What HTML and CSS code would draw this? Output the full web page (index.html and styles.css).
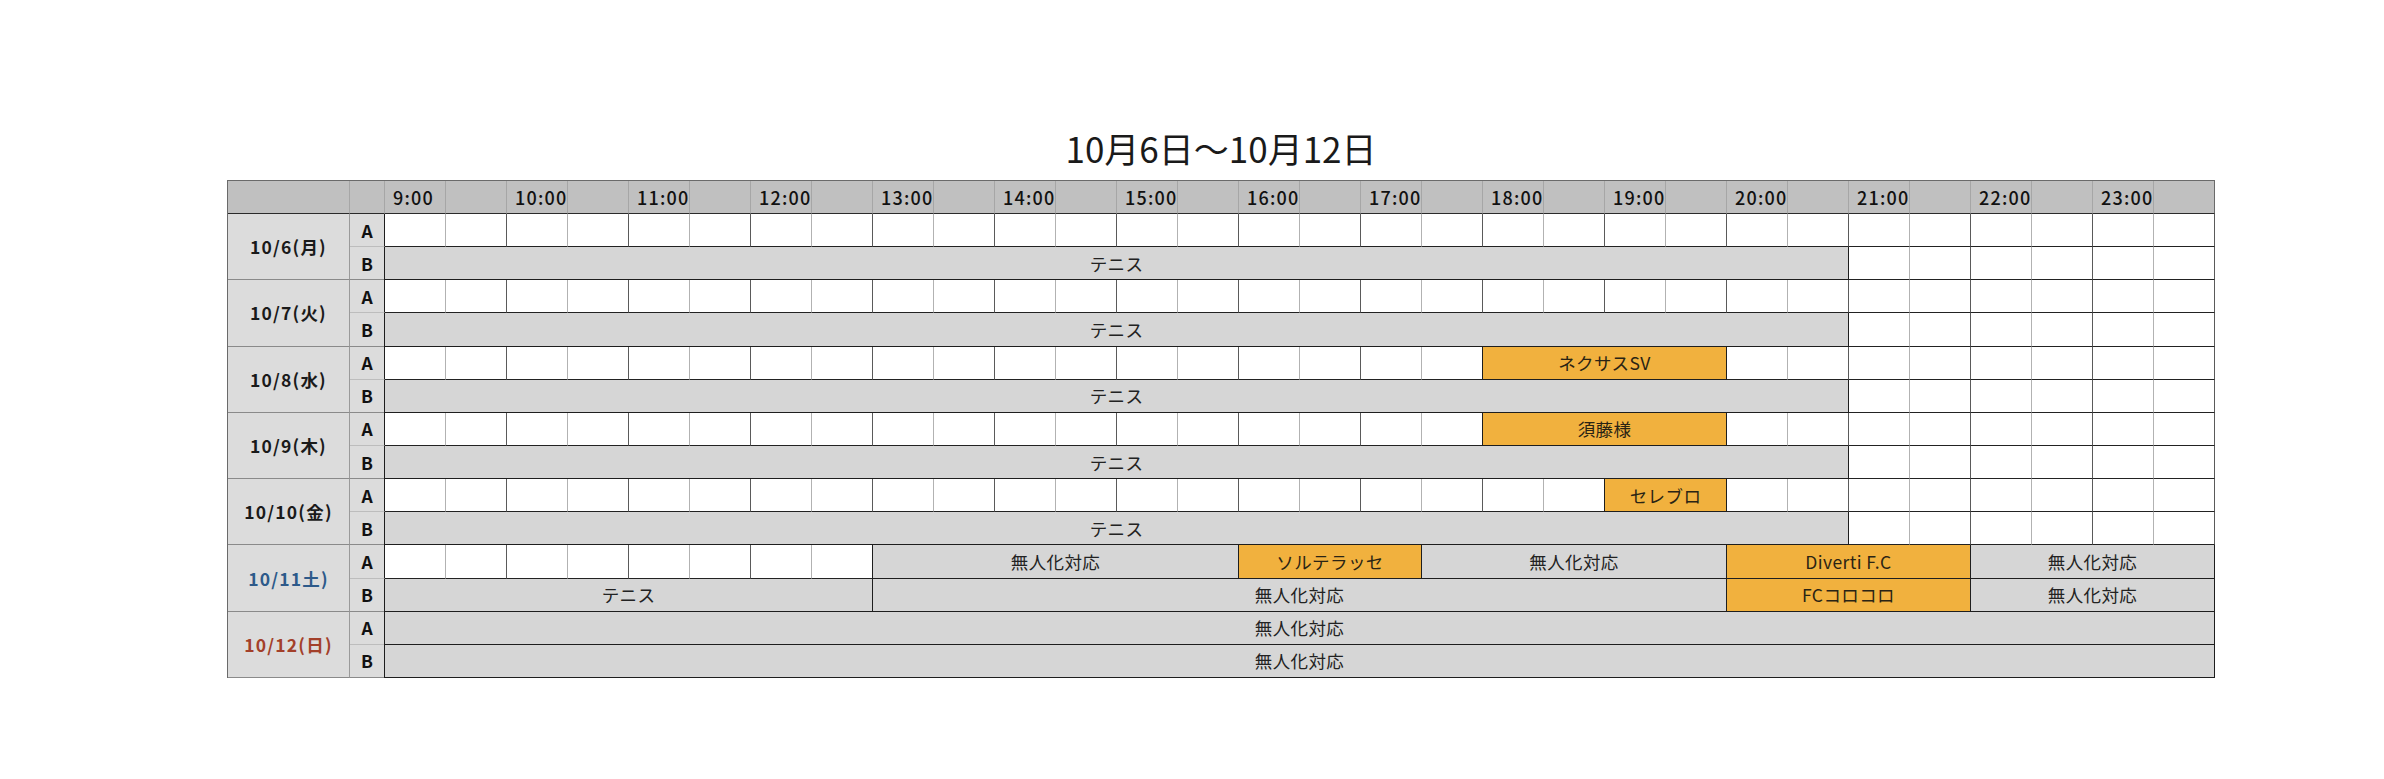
FILE: index.html
```html
<!DOCTYPE html>
<html lang="ja">
<head>
<meta charset="utf-8">
<title>10月6日〜10月12日</title>
<link rel="stylesheet" href="styles.css">
</head>
<body>
<div class="page">
  <div class="wrap">
    <h1 class="title">10月6日〜10月12日</h1>
    <div class="grid">
      <div class="hd corner"></div><div class="hd corner2"></div>
      <div class="hd t">9:00</div><div class="hd"></div>
      <div class="hd t">10:00</div><div class="hd"></div>
      <div class="hd t">11:00</div><div class="hd"></div>
      <div class="hd t">12:00</div><div class="hd"></div>
      <div class="hd t">13:00</div><div class="hd"></div>
      <div class="hd t">14:00</div><div class="hd"></div>
      <div class="hd t">15:00</div><div class="hd"></div>
      <div class="hd t">16:00</div><div class="hd"></div>
      <div class="hd t">17:00</div><div class="hd"></div>
      <div class="hd t">18:00</div><div class="hd"></div>
      <div class="hd t">19:00</div><div class="hd"></div>
      <div class="hd t">20:00</div><div class="hd"></div>
      <div class="hd t">21:00</div><div class="hd"></div>
      <div class="hd t">22:00</div><div class="hd"></div>
      <div class="hd t">23:00</div><div class="hd last"></div>

      <!-- 10/6 -->
      <div class="date">10/6(月)</div>
      <div class="ab a">A</div>
      <i class="c"></i><i class="c o"></i><i class="c"></i><i class="c o"></i><i class="c"></i><i class="c o"></i><i class="c"></i><i class="c o"></i><i class="c"></i><i class="c o"></i>
      <i class="c"></i><i class="c o"></i><i class="c"></i><i class="c o"></i><i class="c"></i><i class="c o"></i><i class="c"></i><i class="c o"></i><i class="c"></i><i class="c o"></i>
      <i class="c"></i><i class="c o"></i><i class="c"></i><i class="c o"></i><i class="c"></i><i class="c o"></i><i class="c"></i><i class="c o"></i><i class="c"></i><i class="c o"></i>
      <div class="ab b">B</div>
      <div class="ev s24">テニス</div>
      <i class="c"></i><i class="c o"></i><i class="c"></i><i class="c o"></i><i class="c"></i><i class="c o"></i>

      <!-- 10/7 -->
      <div class="date">10/7(火)</div>
      <div class="ab a">A</div>
      <i class="c"></i><i class="c o"></i><i class="c"></i><i class="c o"></i><i class="c"></i><i class="c o"></i><i class="c"></i><i class="c o"></i><i class="c"></i><i class="c o"></i>
      <i class="c"></i><i class="c o"></i><i class="c"></i><i class="c o"></i><i class="c"></i><i class="c o"></i><i class="c"></i><i class="c o"></i><i class="c"></i><i class="c o"></i>
      <i class="c"></i><i class="c o"></i><i class="c"></i><i class="c o"></i><i class="c"></i><i class="c o"></i><i class="c"></i><i class="c o"></i><i class="c"></i><i class="c o"></i>
      <div class="ab b">B</div>
      <div class="ev s24">テニス</div>
      <i class="c"></i><i class="c o"></i><i class="c"></i><i class="c o"></i><i class="c"></i><i class="c o"></i>

      <!-- 10/8 -->
      <div class="date">10/8(水)</div>
      <div class="ab a">A</div>
      <i class="c"></i><i class="c o"></i><i class="c"></i><i class="c o"></i><i class="c"></i><i class="c o"></i><i class="c"></i><i class="c o"></i><i class="c"></i><i class="c o"></i>
      <i class="c"></i><i class="c o"></i><i class="c"></i><i class="c o"></i><i class="c"></i><i class="c o"></i><i class="c"></i><i class="c o"></i>
      <div class="ev or s4">ネクサスSV</div>
      <i class="c"></i><i class="c o"></i><i class="c"></i><i class="c o"></i><i class="c"></i><i class="c o"></i><i class="c"></i><i class="c o"></i>
      <div class="ab b">B</div>
      <div class="ev s24">テニス</div>
      <i class="c"></i><i class="c o"></i><i class="c"></i><i class="c o"></i><i class="c"></i><i class="c o"></i>

      <!-- 10/9 -->
      <div class="date">10/9(木)</div>
      <div class="ab a">A</div>
      <i class="c"></i><i class="c o"></i><i class="c"></i><i class="c o"></i><i class="c"></i><i class="c o"></i><i class="c"></i><i class="c o"></i><i class="c"></i><i class="c o"></i>
      <i class="c"></i><i class="c o"></i><i class="c"></i><i class="c o"></i><i class="c"></i><i class="c o"></i><i class="c"></i><i class="c o"></i>
      <div class="ev or s4">須藤様</div>
      <i class="c"></i><i class="c o"></i><i class="c"></i><i class="c o"></i><i class="c"></i><i class="c o"></i><i class="c"></i><i class="c o"></i>
      <div class="ab b">B</div>
      <div class="ev s24">テニス</div>
      <i class="c"></i><i class="c o"></i><i class="c"></i><i class="c o"></i><i class="c"></i><i class="c o"></i>

      <!-- 10/10 -->
      <div class="date">10/10(金)</div>
      <div class="ab a">A</div>
      <i class="c"></i><i class="c o"></i><i class="c"></i><i class="c o"></i><i class="c"></i><i class="c o"></i><i class="c"></i><i class="c o"></i><i class="c"></i><i class="c o"></i>
      <i class="c"></i><i class="c o"></i><i class="c"></i><i class="c o"></i><i class="c"></i><i class="c o"></i><i class="c"></i><i class="c o"></i><i class="c"></i><i class="c o"></i>
      <div class="ev or s2">セレブロ</div>
      <i class="c"></i><i class="c o"></i><i class="c"></i><i class="c o"></i><i class="c"></i><i class="c o"></i><i class="c"></i><i class="c o"></i>
      <div class="ab b">B</div>
      <div class="ev s24">テニス</div>
      <i class="c"></i><i class="c o"></i><i class="c"></i><i class="c o"></i><i class="c"></i><i class="c o"></i>

      <!-- 10/11 -->
      <div class="date sat">10/11土)</div>
      <div class="ab a">A</div>
      <i class="c"></i><i class="c o"></i><i class="c"></i><i class="c o"></i><i class="c"></i><i class="c o"></i><i class="c"></i><i class="c o"></i>
      <div class="ev s6">無人化対応</div>
      <div class="ev or s3">ソルテラッセ</div>
      <div class="ev s5">無人化対応</div>
      <div class="ev or s4">Diverti F.C</div>
      <div class="ev s4">無人化対応</div>
      <div class="ab b">B</div>
      <div class="ev s8">テニス</div>
      <div class="ev s14">無人化対応</div>
      <div class="ev or s4">FCコロコロ</div>
      <div class="ev s4">無人化対応</div>

      <!-- 10/12 -->
      <div class="date sun">10/12(日)</div>
      <div class="ab a">A</div>
      <div class="ev s30">無人化対応</div>
      <div class="ab b">B</div>
      <div class="ev s30">無人化対応</div>
    </div>
  </div>
</div>
</body>
</html>
```

FILE: styles.css
```css
* {
  box-sizing: border-box;
  margin: 0;
  padding: 0;
}

body {
  background: #ffffff;
  font-family: "Noto Sans CJK JP", "Noto Sans", sans-serif;
  color: #1e1e1e;
}

.page {
  padding: 125px 0 0 227px;
}

.wrap {
  width: fit-content;
}

.title {
  font-size: 35px;
  font-weight: 400;
  line-height: 46px;
  text-align: center;
  margin-bottom: 9px;
  color: #1a1a1a;
}

.grid {
  display: grid;
  grid-template-columns: 122px 35px repeat(30, 61px);
  grid-template-rows: 33px repeat(14, 33.15px);
  border-top: 1px solid #6a6a6a;
  border-left: 1px solid #6a6a6a;
}

/* header */
.hd {
  background: #c0c0c0;
  border-right: 1px solid #a6a6a6;
  border-bottom: 1px solid #2a2a2a;
  display: flex;
  align-items: center;
}

.hd.last {
  border-right-color: #6a6a6a;
}

.hd.t {
  font-size: 18px;
  font-weight: 500;
  letter-spacing: 1.2px;
  padding-left: 8px;
  color: #111;
  white-space: nowrap;
}

/* date + court columns */
.date {
  grid-row: span 2;
  background: #dcdcdc;
  border-right: 1px solid #9a9a9a;
  border-bottom: 1px solid #8a8a8a;
  display: flex;
  align-items: center;
  justify-content: center;
  font-size: 17.5px;
  font-weight: 700;
  letter-spacing: 1.2px;
  color: #1a1a1a;
}

.date.sat {
  color: #2d5a8a;
}

.date.sun {
  color: #a3402a;
}

.ab {
  background: #dcdcdc;
  border-right: 1px solid #1e1e1e;
  display: flex;
  align-items: center;
  justify-content: center;
  font-size: 17.5px;
  font-weight: 700;
  color: #111;
}

.ab.a {
  border-bottom: 1px solid #bdbdbd;
}

.ab.b {
  border-bottom: 1px solid #8a8a8a;
}

/* empty half-hour slot */
.c {
  display: block;
  background: #ffffff;
  border-right: 1px solid #b2b2b2;
  border-bottom: 1px solid #222222;
}

.c.o {
  border-right-color: #5a5a5a;
}

/* booked / blocked ranges */
.ev {
  background: #d6d6d6;
  border-right: 1px solid #1e1e1e;
  border-bottom: 1px solid #1e1e1e;
  box-shadow: -1px 0 0 #1e1e1e;
  display: flex;
  align-items: center;
  justify-content: center;
  font-size: 17.5px;
  letter-spacing: 0.4px;
  color: #222;
  white-space: nowrap;
}

.ev.or {
  background: #f1b13e;
  color: #2a2414;
}

.s2 { grid-column: span 2; }
.s3 { grid-column: span 3; }
.s4 { grid-column: span 4; }
.s5 { grid-column: span 5; }
.s6 { grid-column: span 6; }
.s8 { grid-column: span 8; }
.s14 { grid-column: span 14; }
.s24 { grid-column: span 24; }
.s30 { grid-column: span 30; }
```
